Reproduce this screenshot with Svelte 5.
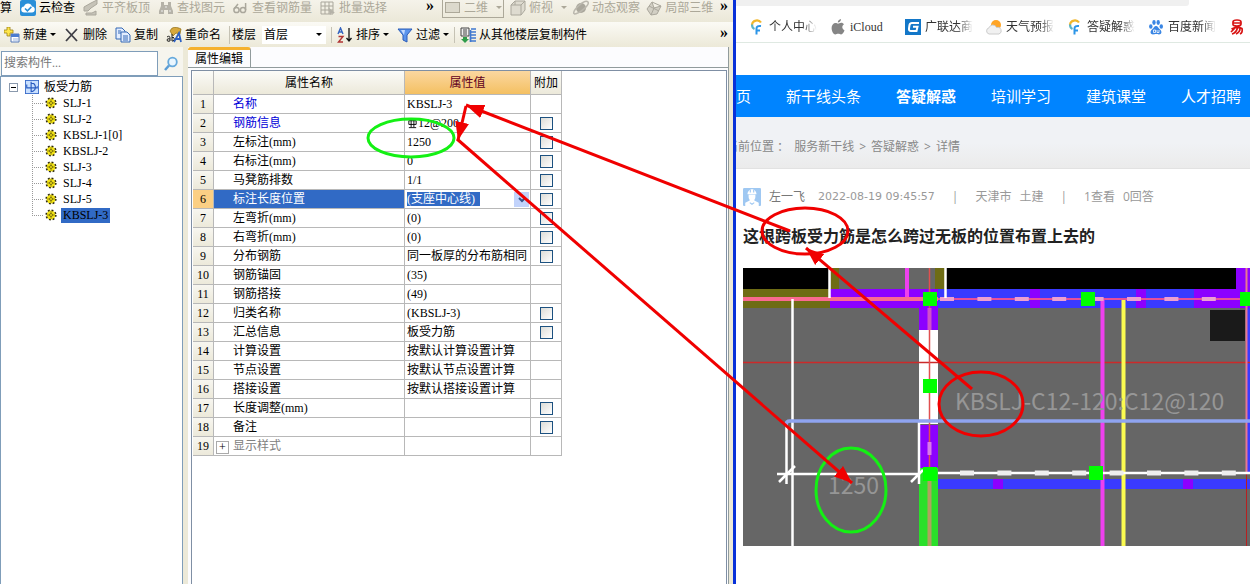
<script lang="ts">
  let keyword = "";
  let floor = "首层";
  let viewMode = "二维";
  let position = "(支座中心线)";

  const members = ["SLJ-1", "SLJ-2", "KBSLJ-1[0]", "KBSLJ-2", "SLJ-3", "SLJ-4", "SLJ-5", "KBSLJ-3"];
  let current = "KBSLJ-3";

  // extra: whether the row has a tick box in the last column
  const rows = [
    { name: "名称", value: "KBSLJ-3", extra: false, key: true },
    { name: "钢筋信息", value: "12@200", extra: true, key: true, rebar: true },
    { name: "左标注(mm)", value: "1250", extra: true },
    { name: "右标注(mm)", value: "0", extra: true },
    { name: "马凳筋排数", value: "1/1", extra: true },
    { name: "标注长度位置", value: "", extra: true, active: true },
    { name: "左弯折(mm)", value: "(0)", extra: true },
    { name: "右弯折(mm)", value: "(0)", extra: true },
    { name: "分布钢筋", value: "同一板厚的分布筋相同", extra: true },
    { name: "钢筋锚固", value: "(35)", extra: false },
    { name: "钢筋搭接", value: "(49)", extra: false },
    { name: "归类名称", value: "(KBSLJ-3)", extra: true },
    { name: "汇总信息", value: "板受力筋", extra: true },
    { name: "计算设置", value: "按默认计算设置计算", extra: false },
    { name: "节点设置", value: "按默认节点设置计算", extra: false },
    { name: "搭接设置", value: "按默认搭接设置计算", extra: false },
    { name: "长度调整(mm)", value: "", extra: true },
    { name: "备注", value: "", extra: true },
    { name: "显示样式", value: "", extra: false, group: true },
  ];

  const bookmarks = [
    { icon: "swirl", text: "个人中心" },
    { icon: "apple", text: "iCloud" },
    { icon: "glodon", text: "广联达商" },
    { icon: "weather", text: "天气预报" },
    { icon: "swirl", text: "答疑解惑" },
    { icon: "paw", text: "百度新闻" },
    { icon: "netease", text: "" },
  ];

  const nav = ["首页", "新干线头条", "答疑解惑", "培训学习", "建筑课堂", "人才招聘"];
</script>

{#snippet icon(name)}
  <svg class="icon" viewBox="0 0 16 16" aria-hidden="true">
    {#if name === "cloud"}
      <rect width="16" height="16" rx="2" fill="#2a8fd8" />
      <path d="M4.5 12.5a3 3 0 0 1-.5-6 4.2 4.2 0 0 1 8 0 3 3 0 0 1-.5 6z" fill="#fff" />
      <path d="M5 8.5l2.4 2.4 4-4" fill="none" stroke="#2a8fd8" stroke-width="1.5" />
    {:else if name === "align"}
      <path d="M1 7l7-4 6-3v4L8 8l-3 3H1zM3 15h10v-4l-4 2H3z" fill="#c6c3b8" stroke="#aaa79c" />
    {:else if name === "find"}
      <path d="M3 2h3v3h4V2h3v4l2 5v3h-5v-4H6v4H1v-3l2-5z" fill="#b5b2a8" />
      <path d="M7 7h2M3 11h2M11 11h2" stroke="#eee" />
    {:else if name === "glasses"}
      <circle cx="3.500" cy="10" r="2.600" fill="none" stroke="#aaa79c" stroke-width="1.500" />
      <circle cx="10" cy="10" r="2.600" fill="none" stroke="#aaa79c" stroke-width="1.500" />
      <path d="M1 9l4-5M12.600 10V3" stroke="#aaa79c" stroke-width="1.500" />
    {:else if name === "batch"}
      <path d="M1 2h12v12H1zM1 6h12M1 10h12M5 2v12M9 2v12" fill="none" stroke="#aaa79c" />
      <path d="M8 7l7 6h-3l-2 2z" fill="#b5b2a8" />
    {:else if name === "cube"}
      <path d="M1 5l4-4h10v9l-4 5H1zM1 5h10v10M11 5l4-4M5 1v4" fill="#dedbd0" stroke="#aaa79c" />
    {:else if name === "orbit"}
      <circle cx="8" cy="8" r="5" fill="#aaa79c" />
      <path d="M1 14C-1 10 12-1 15 2c2 3-9 12-14 12" fill="none" stroke="#bbb8ae" stroke-width="1.500" />
    {:else if name === "local3d"}
      <path d="M1 9l5-7 9 4-4 8-6 1zM6 2l2 6 7-2M8 8l-3 7M3 6l10 5" fill="#d2cfc4" stroke="#aaa79c" />
    {:else if name === "new"}
      <path d="M7 7h8v8H7z" fill="#fff" stroke="#5478b8" />
      <path d="M7 7h8v3H7z" fill="#4b7cd0" />
      <path d="M9 12h5M9 14h5" stroke="#9db6e0" />
      <path d="M3 0h3v3h3v3H6v3H3V6H0V3h3z" fill="#ffe64a" stroke="#a08314" stroke-width=".8" />
    {:else if name === "delete"}
      <path d="M2 2l11 12M13 2L2 14" stroke="#3f3f46" stroke-width="1.800" />
    {:else if name === "copy"}
      <path d="M1 1h6l3 3v8H1z" fill="#e2edff" stroke="#3568b5" />
      <path d="M6 5h6l3 3v7H6z" fill="#e2edff" stroke="#3568b5" />
      <path d="M3 4h3M3 6h3M8 9h5M8 11h5M8 13h5" stroke="#3568b5" />
    {:else if name === "rename"}
      <path d="M4 4c2-5 7-4 11-2l-1 5-4-1-3 3z" fill="#d7a83c" stroke="#8a6914" stroke-width=".7" />
      <path d="M1 10q3-2 3 1v3q-3 1-3-1t3-1M6 7v7h1q2-1 1-3t-2 0" fill="none" stroke="#222" />
      <path d="M8 15l5-9 2 9M10 12h4" fill="none" stroke="#2d61c4" stroke-width="1.800" />
    {:else if name === "sort"}
      <path d="M1 7l2.500-6L6 7M2 5h3" fill="none" stroke="#3464c0" stroke-width="1.400" />
      <path d="M1.500 9.500H6L1.500 15H6" fill="none" stroke="#b03434" stroke-width="1.400" />
      <path d="M12 1v13M9.500 11l2.500 3 2.500-3" fill="none" stroke="#111" stroke-width="1.300" />
    {:else if name === "filter"}
      <path d="M1 2h14l-5 6v7l-4-2V8z" fill="#5a94ec" stroke="#2a5cb8" />
      <path d="M4 3h4L7 8z" fill="#c3dbff" />
    {:else if name === "floors"}
      <path d="M1 1h8v8H1z" fill="#eee" stroke="#444" />
      <path d="M3 3h4M3 5h4M3 7h4" stroke="#444" />
      <path d="M11 2h5M10 5h6M10 8h6M10 11h6M10 14h6M10.500 3v12" stroke="#3f78d0" stroke-width="1.700" />
      <path d="M3 10h4v2h2l-4 4-4-4h2z" fill="#2f9c4a" />
    {:else if name === "search"}
      <circle cx="9.500" cy="6" r="4.300" fill="#e9f6ff" stroke="#66a9dc" stroke-width="1.800" />
      <path d="M6 9.500l-4 4.500" stroke="#5b9dd5" stroke-width="2.500" />
    {:else if name === "slab"}
      <rect x=".5" y=".5" width="15" height="15" fill="#c9e0ff" stroke="#3568c8" />
      <path d="M2 5v4h12V7M7 2v12M7 4h3q2 2 2 4.500T9 13H7" fill="none" stroke="#2a5cc0" stroke-width="1.300" />
    {:else if name === "gear"}
      <circle cx="8" cy="8" r="6" fill="#f4e414" />
      <circle cx="8" cy="8" r="6.500" fill="none" stroke="#2a2608" stroke-width="2" stroke-dasharray="2.550 2.550" />
      <circle cx="8" cy="8" r="2" fill="#f4e414" stroke="#5a5208" />
      <path d="M8 3v3M8 10v3M3 8h3M10 8h3" stroke="#6a6010" />
    {:else if name === "swirl"}
      <path d="M12 3.500C10 .5 3.500.5 3 6" fill="none" stroke="#f1b62a" stroke-width="2.200" />
      <path d="M3 5.500c0 2.500 1 3.800 2.500 4.500" fill="none" stroke="#5ab4c8" stroke-width="2.200" />
      <path d="M7.500 15.500V9.500q0-3 4.500-2.500M7 11.500h4" fill="none" stroke="#2c95e8" stroke-width="2" />
    {:else if name === "apple"}
      <path d="M11 0c0 2-1.500 3.500-3.200 3.500C7.700 1.700 9.200.3 11 0zM8 4.700c.8 0 1.700-.9 3.200-.9 1.200 0 2.200.7 2.800 1.500-2.600 1.600-2 5 .5 6-.6 1.700-1.900 4.200-3.400 4.200-1.100 0-1.600-.7-2.900-.7s-1.900.7-2.900.7C3.500 15.500 1.600 12 1.600 9s1.800-5 4-5c1 0 1.800.7 2.400.7z" fill="#858585" />
    {:else if name === "glodon"}
      <rect width="16" height="16" fill="#1377c8" />
      <path d="M14 4H7q-2 0-2.500 2L4 9.500q-.3 2.500 2 2.500h5.500l1-4.300H8" fill="none" stroke="#fff" stroke-width="2" />
    {:else if name === "weather"}
      <circle cx="10" cy="6" r="5" fill="#ffa526" />
      <path d="M3 15a3.200 3.200 0 0 1 0-6.200 4 4 0 0 1 7.500-.3A3.300 3.300 0 0 1 13 15z" fill="#f1f1f1" stroke="#ccc" />
    {:else if name === "paw"}
      <g fill="#3a86e4">
        <ellipse cx="2.800" cy="7.500" rx="1.700" ry="2.300" /><ellipse cx="6" cy="3.500" rx="1.700" ry="2.400" />
        <ellipse cx="10.200" cy="3.500" rx="1.700" ry="2.400" /><ellipse cx="13.300" cy="7.500" rx="1.700" ry="2.300" />
        <path d="M8 7c2 0 2 2 4 3.500 2.500 2 1.500 5-1 5-1.500 0-2-.4-3-.4s-1.500.4-3 .4c-2.500 0-3.500-3-1-5C6 9 6 7 8 7z" />
      </g>
      <path d="M5.500 11h2v2.500h-2zM9 11v2.500h2V11" fill="none" stroke="#fff" stroke-width=".8" />
    {:else if name === "netease"}
      <path d="M4 5.500V3q0-2 4-2t4 2v2q0 2-4 2T4 5.500zM4.500 4h7M2.500 10Q8 7 13 9.500q1 4-2 5.500M5.500 9.500L2 13M8.500 9Q7 14 3 15M11 9.500Q11 13 7 15" fill="none" stroke="#d81414" stroke-width="1.700" />
    {:else if name === "user"}
      <rect width="16" height="16" rx="1" fill="#9fc8f2" />
      <path d="M4 5.500C4 3 6 1 8 1s4 2 4 4.500zM5 6h6v2c0 1.500-1 2.500-1 3l4 2v3H2v-3l4-2c0-.5-1-1.500-1-3z" fill="#fff" />
      <path d="M6.500 1.500V4M9.500 1.500V4M6 13l2 1.500 2-1.500" fill="none" stroke="#9fc8f2" />
    {/if}
  </svg>
{/snippet}

{#snippet tool(name, text, off)}
  <button class="tool" disabled={off}>{@render icon(name)}{text}</button>
{/snippet}

<main class="screen">
  <section class="cad">
    <div class="toolbar upper">
      <button class="tool">算</button>
      {@render tool("cloud", "云检查", false)}
      {@render tool("align", "平齐板顶", true)}
      {@render tool("find", "查找图元", true)}
      {@render tool("glasses", "查看钢筋量", true)}
      {@render tool("batch", "批量选择", true)}
      <button class="more" aria-label="更多">»</button>
      <div class="views">
        <span class="mode">
          <i></i>
          <select aria-label="视图" bind:value={viewMode} disabled><option>二维</option></select>
          <b class="caret"></b>
        </span>
        <button class="tool wide" disabled>{@render icon("cube")}俯视<b class="caret"></b></button>
        {@render tool("orbit", "动态观察", true)}
        {@render tool("local3d", "局部三维", true)}
        <button class="more last" aria-label="更多">»</button>
      </div>
    </div>
    <div class="toolbar lower">
      <button class="tool">{@render icon("new")}新建<b class="caret"></b></button>
      {@render tool("delete", "删除", false)}
      {@render tool("copy", "复制", false)}
      {@render tool("rename", "重命名", false)}
      <div class="floor">
        <label for="floor">楼层</label>
        <span>
          <select id="floor" bind:value={floor}><option>首层</option></select>
          <b class="caret"></b>
        </span>
      </div>
      <button class="tool ruled">{@render icon("sort")}排序<b class="caret"></b></button>
      <button class="tool">{@render icon("filter")}过滤<b class="caret"></b></button>
      <button class="tool ruled">{@render icon("floors")}从其他楼层复制构件</button>
      <button class="more last" aria-label="更多">»</button>
    </div>

    <div class="panes">
      <aside>
        <div class="search">
          <input type="text" aria-label="搜索构件" placeholder="搜索构件..." bind:value={keyword} />
          <button aria-label="搜索">{@render icon("search")}</button>
        </div>
        <div class="tree">
          <div class="root"><button class="fold" aria-label="折叠"></button>{@render icon("slab")}板受力筋</div>
          <ul>
            {#each members as m}
              <li>
                {@render icon("gear")}
                <button class:on={m === current} on:click={() => (current = m)}>{m}</button>
              </li>
            {/each}
          </ul>
        </div>
      </aside>

      <div class="editor">
        <div class="tabs"><button>属性编辑</button></div>
        <div class="sheet">
          <table>
            <colgroup><col class="c1" /><col class="c2" /><col class="c3" /><col class="c4" /></colgroup>
            <thead>
              <tr><th></th><th>属性名称</th><th class="hot">属性值</th><th>附加</th></tr>
            </thead>
            <tbody>
              {#each rows as row, i}
                <tr class:active={row.active}>
                  <th>{i + 1}</th>
                  <td class="name" class:key={row.key} class:group={row.group}>
                    {#if row.group}<button class="plus" aria-label="展开">+</button>{/if}{row.name}
                  </td>
                  <td class="value">
                    {#if row.active}
                      <span class="drop">
                        <select aria-label={row.name} bind:value={position}><option>(支座中心线)</option></select>
                        <i><svg viewBox="0 0 15 15"><path d="M5 6l3 3 3-3" fill="none" stroke="#3a5488" stroke-width="2" /></svg></i>
                      </span>
                    {:else}
                      {#if row.rebar}<svg class="rebar" viewBox="0 0 12 12"><path d="M2 3h8v4H2zM4.500 1v9M7.500 1v9M2 10.500h8" fill="none" stroke="#000" /></svg>{/if}{row.value}
                    {/if}
                  </td>
                  <td class="tick">
                    {#if row.extra}<input type="checkbox" aria-label={row.name + "附加"} />{/if}
                  </td>
                </tr>
              {/each}
            </tbody>
          </table>
        </div>
      </div>
    </div>
  </section>

  <section class="web">
    <div class="address"></div>
    <div class="bookmarks">
      {#each bookmarks as b}
        <a href="#{b.icon}" aria-label={b.text || "网易"}>
          {@render icon(b.icon)}{#if b.text}<span class:short={b.icon === "apple"}>{b.text}</span>{/if}
        </a>
      {/each}
    </div>
    <nav>
      {#each nav as n}
        <a href="#nav" class:on={n === "答疑解惑"}>{n}</a>
      {/each}
    </nav>
    <div class="crumbs">
      <span>当前位置 ：</span>
      <a href="#home">服务新干线</a><span>&gt;</span><a href="#ask">答疑解惑</a><span>&gt;</span><span>详情</span>
    </div>
    <article>
      <div class="meta">
        {@render icon("user")}
        <a href="#user">左一飞</a>
        <time>2022-08-19 09:45:57</time>
        <span class="bar">|</span>
        <span>天津市</span><span>土建</span>
        <span class="bar">|</span>
        <span>1查看</span><span>0回答</span>
      </div>
      <h1>这根跨板受力筋是怎么跨过无板的位置布置上去的</h1>

      <svg class="plan" viewBox="0 0 507 278" preserveAspectRatio="xMinYMin slice">
        <rect width="507" height="278" fill="#666" />
        <path d="M0 0h87v21H0zM202 0h291v21H202z" fill="#000" />
        <path d="M0 21h87v19H0zM88 0h8v21h-8zM192 0h10v21h-10z" fill="#6e6c14" />
        <path d="M195 21h312v19H195zM195 211h312v10H195zM504 40h3v165h-3z" fill="#3a3aff" />
        <path d="M87 21h108v19H87zM287 21h10v19h-10zM393 21h10v19h-10zM451 21h56v19h-56zM493 0h14v21h-14zM176 40h19v22h-19zM250 211h10v10h-10zM440 211h10v10h-10z" fill="#8c00ff" />
        <path d="M176 62h19v94h-19z" fill="#fff" />
        <path d="M177 157h18v43h-18z" fill="#8c00ff" />
        <path d="M176 200h19v78h-19z" fill="#2ae02a" />
        <rect x="467" y="42" width="35" height="31" fill="#1a1a1a" />
        <path d="M0 94.500h507" stroke="#cc2a2a" stroke-width="1.500" />
        <g stroke="#ee40ee" stroke-width="4"><path d="M164 0v31M359.500 31v247" /></g>
        <path d="M380.500 31v247" stroke="#fbfb50" stroke-width="4" />
        <text x="212" y="142">KBSLJ-C12-120:C12@120</text>
        <text x="85" y="226">1250</text>
        <path d="M0 31h195" stroke="#fa6a90" stroke-width="4" />
        <path d="M195 31h312" stroke="#e85098" stroke-width="2" />
        <path d="M197 31h290" stroke="#eca0d0" stroke-width="4" stroke-dasharray="14 23.400" />
        <path d="M86.500 0v30M202.500 0v30M49.500 31v247M43.500 154v62M176 154v62" stroke="#fff" stroke-width="2.500" />
        <path d="M186.500 0v278" stroke="#e05050" stroke-width="1.500" />
        <path d="M186.500 40v22" stroke="#d050c8" stroke-width="4" />
        <path d="M186.500 212v66" stroke="#b0a060" stroke-width="4" />
        <path d="M186.500 174v13" stroke="#d87ae8" stroke-width="4" />
        <path d="M503.500 0v205" stroke="#e87890" stroke-width="2" />
        <path d="M503.500 205v73" stroke="#b82020" />
        <path d="M43 157q0-4 4-4h460" fill="none" stroke="#8fa4f0" stroke-width="3.500" />
        <path d="M34 206h142M195 205h312M36 214l16-16M168 214l12-12" stroke="#fff" stroke-width="2.500" />
        <path d="M217 205h290" stroke="#eee" stroke-width="5" stroke-dasharray="14 23.400" />
        <g fill="#0f0">
          <rect x="180" y="24" width="14" height="14" /><rect x="338" y="24" width="14" height="14" />
          <rect x="497" y="24" width="14" height="14" /><rect x="180" y="111" width="14" height="14" />
          <rect x="180" y="199" width="14" height="14" /><rect x="346" y="198" width="14" height="14" />
        </g>
      </svg>
    </article>
  </section>

  <!-- hand-drawn marks that tie the question to both windows -->
  <svg class="marks" viewBox="0 0 1250 584" aria-hidden="true">
    <defs>
      <marker id="head" markerUnits="userSpaceOnUse" markerWidth="20" markerHeight="16" refX="18" refY="8" orient="auto">
        <path d="M0 1l18 7-18 7z" fill="#f00000" />
      </marker>
    </defs>
    <g fill="none" stroke-width="3">
      <g stroke="#14f014">
        <ellipse cx="411" cy="138" rx="43" ry="19" />
        <ellipse cx="851" cy="490" rx="35" ry="42" />
      </g>
      <g stroke="#f00000">
        <ellipse cx="805" cy="231" rx="43" ry="23" />
        <ellipse cx="981" cy="404" rx="42" ry="32" />
        <path d="M972 389L806 248" marker-end="url(#head)" />
        <path d="M790 231L466 105" marker-end="url(#head)" />
        <path d="M466 106L458 140" marker-end="url(#head)" />
        <path d="M457 139L852 483" marker-end="url(#head)" />
      </g>
    </g>
  </svg>
</main>

<style>
  :global(body) {
    margin: 0;
    background: #fff;
  }

  .screen {
    position: relative;
    display: grid;
    grid-template-columns: 736fr 514fr;
    min-height: 100vh;
    overflow: hidden;
    font: 12px/16px "Liberation Serif", "Noto Sans CJK SC", serif;
    color: #000;
  }

  button,
  select,
  input {
    font: inherit;
    color: inherit;
    margin: 0;
    padding: 0;
    border: 0;
    background: none;
  }

  select {
    appearance: none;
    opacity: 1;
  }

  a {
    color: inherit;
    text-decoration: none;
  }

  .icon {
    width: 16px;
    height: 16px;
    flex: none;
  }

  .cad {
    min-width: 0;
    display: flex;
    flex-direction: column;
    background: #ece9d8;
    border-right: 3px solid #0831d9;
  }

  .toolbar {
    display: flex;
    align-items: center;
    box-sizing: border-box;
    gap: 8px;
    padding-right: 5px;
    white-space: nowrap;
    background: linear-gradient(#fbfaf5, #ece9d8);
  }

  .upper {
    height: 22px;
    padding-bottom: 7px;
    background: linear-gradient(#f5f3ea, #ebe8d8);
  }

  .lower {
    height: 25px;
    padding-left: 4px;
  }

  .tool {
    display: flex;
    align-items: center;
    gap: 3px;
    flex: none;
  }

  .tool:disabled,
  .mode {
    color: #aca899;
  }

  .caret {
    border: 3px solid transparent;
    border-top-color: currentColor;
    border-bottom: 0;
    flex: none;
  }

  .views {
    flex: 1;
    display: flex;
    align-items: center;
    gap: 6px;
  }

  .wide .caret {
    margin-left: 5px;
  }

  .more {
    margin: 0 0 4px 31px;
    font-size: 16px;
    line-height: 12px;
    font-weight: bold;
  }

  .more.last {
    margin-left: auto;
  }

  .mode {
    display: flex;
    align-items: center;
    box-sizing: border-box;
    width: 62px;
    height: 20px;
    border: 1px solid #aca899;
    flex: none;
  }

  .mode i {
    width: 13px;
    height: 9px;
    margin: 0 4px 0 2px;
    border: 1px solid #aca899;
    background: #dcd9cc;
  }

  .mode select {
    width: 32px;
  }

  .floor {
    display: flex;
    align-items: center;
    gap: 6px;
    padding-left: 2px;
    border-left: 1px solid #c5c2b4;
  }

  .floor span {
    display: flex;
    align-items: center;
    background: #fff;
    padding: 0 4px 0 2px;
  }

  .floor select {
    width: 52px;
    height: 18px;
  }

  .ruled {
    padding-left: 5px;
    border-left: 1px solid #c5c2b4;
    margin-left: -3px;
  }

  .panes {
    flex: 1;
    display: grid;
    grid-template-columns: 183px 1fr;
    gap: 5px;
    padding-right: 4px;
  }

  aside {
    display: flex;
    flex-direction: column;
  }

  .search {
    display: flex;
    padding-top: 4px;
    background: #f6f5ee;
  }

  .search input {
    box-sizing: border-box;
    width: 157px;
    height: 25px;
    margin-left: 1px;
    padding-left: 2px;
    background: #fff;
    border: 1px solid #7f9db9;
  }

  .search input::placeholder {
    color: #777;
    opacity: 1;
  }

  .search button {
    flex: 1;
    display: grid;
    place-items: center;
  }

  .tree {
    flex: 1;
    padding-top: 2px;
    background: #fff;
    border: 1px solid #7f9db9;
    border-bottom: 0;
  }

  .root {
    display: flex;
    align-items: center;
    gap: 5px;
    height: 16px;
    padding-left: 8px;
  }

  .root .icon {
    width: 14px;
    height: 14px;
    margin-left: 2px;
  }

  .fold {
    box-sizing: border-box;
    width: 9px;
    height: 9px;
    border: 1px solid #8a99ad;
    background: linear-gradient(#000, #000) center / 5px 1px no-repeat;
  }

  ul {
    list-style: none;
    margin: 0 0 0 31px;
    padding: 0;
  }

  li {
    display: flex;
    align-items: center;
    height: 16px;
    background: repeating-linear-gradient(#999 0 1px, #fff 1px 2px) 0 0 / 1px 100% no-repeat;
  }

  li:last-child {
    background-size: 1px 9px;
  }

  li::before {
    content: "";
    width: 11px;
    border-top: 1px dotted #999;
  }

  li .icon {
    width: 12px;
    height: 12px;
    margin: 0 4px 0 2px;
  }

  li button {
    padding: 0 2px;
    line-height: 15px;
  }

  li button.on {
    background: #316ac5;
  }

  .editor {
    display: flex;
    flex-direction: column;
    background: #fcfcfe;
    border-right: 1px solid #919b9c;
  }

  .tabs {
    height: 20px;
    border-bottom: 1px solid #919b9c;
  }

  .tabs button {
    box-sizing: border-box;
    height: 20px;
    padding: 0 7px;
    line-height: 14px;
    border-top: 3px solid #f5b12e;
    border-right: 1px solid #919b9c;
    border-radius: 3px 3px 0 0;
    background: #fcfcfe;
  }

  .sheet {
    flex: 1;
    margin: 2px 1px 0 3px;
    padding-left: 1px;
    background: #fff;
    border: 1px solid #7f8fa4;
    border-bottom: 0;
  }

  table {
    table-layout: fixed;
    width: 369px;
    border-spacing: 0;
  }

  .c1 {
    width: 21px;
  }

  .c2 {
    width: 191px;
  }

  .c3 {
    width: 126px;
  }

  .c4 {
    width: 31px;
  }

  th,
  td {
    box-sizing: border-box;
    height: 19px;
    padding: 0;
    font-weight: normal;
    line-height: 16px;
    white-space: nowrap;
    border-right: 1px solid #b8b8b8;
    border-bottom: 1px solid #b8b8b8;
  }

  th {
    background: linear-gradient(#f7f6f0, #ece9da);
  }

  thead th {
    height: 24px;
    background: linear-gradient(#fbfbf8, #ece9da);
  }

  thead .hot {
    background: linear-gradient(#fbd7a0, #f4c062);
    color: #600020;
  }

  .name {
    padding-left: 19px;
  }

  .key {
    color: #0000d8;
  }

  .group {
    padding-left: 2px;
    color: #808080;
  }

  .plus {
    box-sizing: border-box;
    width: 13px;
    height: 13px;
    margin-right: 4px;
    border: 1px solid #aaa;
    line-height: 10px;
    color: #000;
    vertical-align: -1px;
  }

  .value {
    padding-left: 2px;
  }

  .active th {
    background: #fbcf84;
  }

  .active .name {
    background: #316ac5;
    color: #fff;
  }

  .drop {
    display: flex;
    justify-content: space-between;
    padding-right: 1px;
  }

  .drop select {
    height: 14px;
    width: 73px;
    line-height: 14px;
    background: #316ac5;
    color: #fff;
  }

  .drop i {
    width: 15px;
    height: 15px;
    background: #c2d3fb;
  }

  .drop svg {
    display: block;
  }

  .rebar {
    width: 11px;
    height: 11px;
    vertical-align: -2px;
  }

  .tick input {
    appearance: none;
    display: block;
    box-sizing: border-box;
    width: 13px;
    height: 13px;
    margin: 0 auto;
    border: 1px solid #1c5180;
    background: linear-gradient(135deg, #dcdcd7, #fff);
  }

  .web {
    min-width: 0;
    overflow: hidden;
    background: #fff;
    font-family: "Open Sans", "Noto Sans CJK SC", sans-serif;
  }

  .address {
    height: 6px;
    margin-right: 61px;
    background: #f0f0f0;
    border-radius: 0 0 3px 0;
  }

  .bookmarks {
    display: flex;
    gap: 14px;
    height: 37px;
    padding: 6px 0 0 13px;
    box-sizing: border-box;
    border-bottom: 1px solid #dfe9e2;
    font-family: "Liberation Serif", "Noto Sans CJK SC", serif;
    color: #333;
  }

  .bookmarks a {
    display: flex;
    align-items: center;
    gap: 4px;
    flex: none;
  }

  .bookmarks span {
    width: 48px;
    margin-right: -1px;
    white-space: nowrap;
    mask-image: linear-gradient(90deg, #000 70%, transparent);
  }

  .bookmarks .short {
    width: 42px;
    mask-image: none;
  }

  nav {
    display: flex;
    align-items: center;
    gap: 35px;
    height: 42px;
    margin-top: 32px;
    background: #0084ff;
    color: #fff;
    font-size: 15px;
  }

  nav a {
    flex: none;
  }

  nav a:first-child {
    margin-left: -15px;
  }

  nav .on {
    font-weight: bold;
  }

  .crumbs {
    display: flex;
    align-items: center;
    gap: 5px;
    box-sizing: border-box;
    height: 52px;
    padding-top: 8px;
    border-bottom: 1px solid #e2e2e2;
    background: linear-gradient(#f0f2f5 50%, #ebebeb);
    color: #888;
  }

  .crumbs span:first-child {
    margin-left: -10px;
  }

  article {
    padding: 18px 0 0 7px;
  }

  .meta {
    display: flex;
    align-items: center;
    gap: 8px;
    height: 20px;
    color: #999;
  }

  .meta .icon {
    width: 18px;
    height: 18px;
  }

  .meta a {
    margin-right: 5px;
    color: #777;
  }

  .meta time {
    font-family: "DejaVu Sans", sans-serif;
    font-size: 11px;
  }

  .meta .bar {
    padding: 0 9px;
  }

  h1 {
    margin: 18px 0 20px;
    font-size: 16px;
    line-height: 23px;
    font-weight: bold;
    color: #222;
  }

  .plan {
    display: block;
    width: 100%;
    height: 278px;
  }

  .plan text {
    font: 23px "Noto Sans CJK SC", sans-serif;
    fill: #969696;
  }

  .marks {
    position: absolute;
    left: 0;
    top: 0;
    width: 1250px;
    height: 584px;
    pointer-events: none;
  }
</style>
